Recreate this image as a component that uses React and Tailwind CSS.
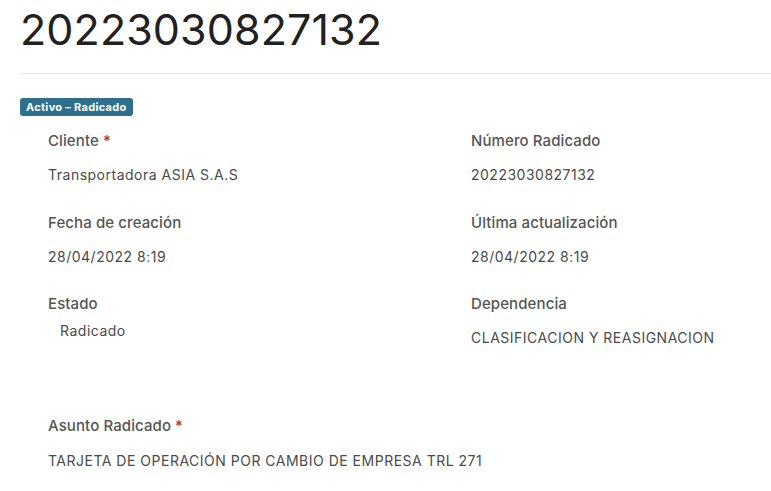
const Field = ({ label, required, value, className = '', valueClass = '' }) => (
  <div className={className}>
    <p className="text-[15px] font-medium text-[#555] leading-5 tracking-[0.1px]">
      {label}
      {required && <span className="text-[#a33] ml-1">*</span>}
    </p>
    <p className={`text-[14px] text-[#4a4a4a] tracking-[0.5px] leading-5 ${valueClass}`}>{value}</p>
  </div>
)

export default function App() {
  return (
    <div className="min-h-screen bg-white font-['Inter',sans-serif]">
      <div className="pl-5">
        <h1 className="text-[43px] leading-[54px] pt-[2px] text-[#212121] tracking-[0.1px]">20223030827132</h1>
        <div className="border-t border-[#e6e6e6] mt-[17px]"></div>
        <span className="inline-block mt-6 bg-[#2e6f8d] text-white text-[11px] font-bold leading-[18px] px-[6px] tracking-[0.3px] rounded-[3px]">
          Activo – Radicado
        </span>
      </div>

      <div className="grid grid-cols-[423px_1fr] pl-12 pt-[14px]">
        <div className="flex flex-col">
          <Field label="Cliente" required value="Transportadora ASIA S.A.S" valueClass="mt-[14px]" />
          <Field label="Fecha de creación" value="28/04/2022 8:19" className="mt-[28px]" valueClass="mt-[14px]" />
          <Field label="Estado" value="Radicado" className="mt-[27px]" valueClass="mt-[7px] pl-3" />
        </div>
        <div className="flex flex-col">
          <Field label="Número Radicado" value="20223030827132" valueClass="mt-[14px]" />
          <Field label="Última actualización" value="28/04/2022 8:19" className="mt-[28px]" valueClass="mt-[14px]" />
          <Field label="Dependencia" value="CLASIFICACION Y REASIGNACION" className="mt-[27px]" valueClass="mt-[14px]" />
        </div>
      </div>

      <div className="pl-12 mt-[68px]">
        <Field label="Asunto Radicado" required value="TARJETA DE OPERACIÓN POR CAMBIO DE EMPRESA TRL 271" valueClass="mt-[15px]" />
      </div>
    </div>
  )
}
